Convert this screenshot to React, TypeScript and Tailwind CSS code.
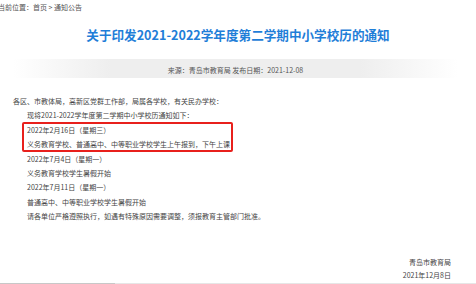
const FONT = { fontFamily: '"Noto Sans CJK SC", "Noto Sans", sans-serif' };

const BODY_LINES = [
  '2022年7月4日（星期一）',
  '义务教育学校学生暑假开始',
  '2022年7月11日（星期一）',
  '普通高中、中等职业学校学生暑假开始',
  '请各单位严格遵照执行，如遇有特殊原因需要调整，须报教育主管部门批准。',
];

export default function App() {
  return (
    <div className="w-[476px] h-[284px] overflow-hidden bg-white text-[#444]" style={FONT}>
      {/* breadcrumb */}
      <div className="h-[14px] flex items-center -ml-[2px] text-[7px] text-[#555]">
        当前位置：首页 &gt; 通知公告
      </div>

      {/* title */}
      <h1 className="mt-[11px] text-center text-[12.6px] leading-[20px] font-bold text-[#1f7ed8]">
        关于印发2021-2022学年度第二学期中小学校历的通知
      </h1>

      {/* source bar */}
      <div className="mt-[14px] ml-[13px] mr-[18px] h-[19px] pt-[6px] text-center text-[7px] leading-[10px] text-[#555] bg-[linear-gradient(to_right,#ffffff,#eeeeee_22%,#eeeeee_78%,#ffffff)]">
        来源：青岛市教育局 发布日期：2021-12-08
      </div>

      {/* body */}
      <div className="mt-[16px] text-[7px] leading-[14.4px]">
        <p className="pl-[13px]">各区、市教体局，高新区党群工作部，局属各学校，有关民办学校：</p>
        <p className="pl-[27px]">现将2021-2022学年度第二学期中小学校历通知如下：</p>
        <div className="relative pl-[27px]">
          <p>2022年2月16日（星期三）</p>
          <p>义务教育学校、普通高中、中等职业学校学生上午报到，下午上课</p>
          <span className="absolute left-[22px] top-[-1px] w-[211px] h-[30px] border-2 border-[#e8201c] rounded-[2px]" />
        </div>
        {BODY_LINES.map(line => (
          <p key={line} className="pl-[27px]">{line}</p>
        ))}
      </div>

      {/* signature */}
      <div className="mt-[32px] pr-[25px] text-right text-[7px] leading-[13px]">
        <p>青岛市教育局</p>
        <p>2021年12月8日</p>
      </div>

      {/* bottom scrollbar line */}
      <div className="mt-[1px] flex h-[2px]">
        <div className="w-[115px] bg-[#c8c8c8]" />
        <div className="flex-1 bg-[#e6e6e6]" />
      </div>
    </div>
  );
}
